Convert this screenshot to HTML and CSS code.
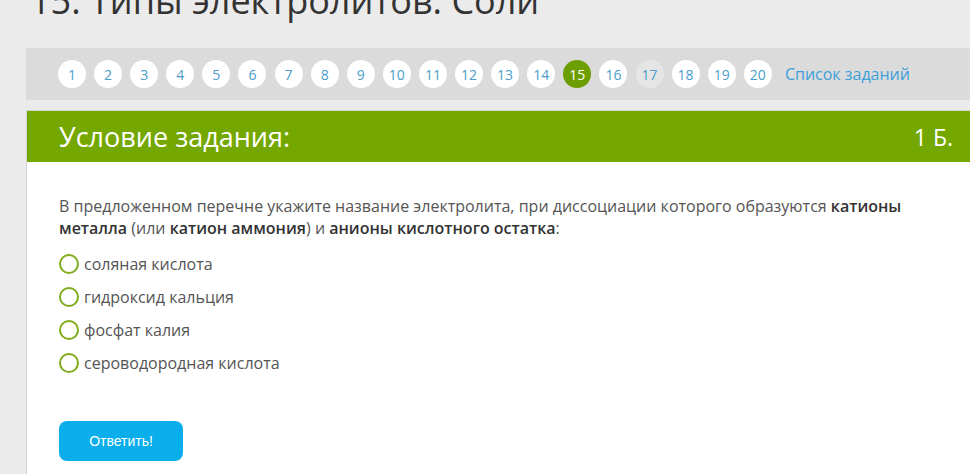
FILE: index.html
```html
<!DOCTYPE html>
<html lang="ru">
<head>
  <meta charset="UTF-8" />
  <meta name="viewport" content="width=device-width, initial-scale=1.0">
  <title>15. Типы электролитов. Соли</title>
  <link rel="stylesheet" href="styles.css">
</head>
<body>
  <div class="page">

    <!-- Title -->
    <h1 class="page-title">15. Типы электролитов. Соли</h1>

    <!-- Task navigation -->
    <div class="task-nav">
      <a class="task-num">1</a>
      <a class="task-num">2</a>
      <a class="task-num">3</a>
      <a class="task-num">4</a>
      <a class="task-num">5</a>
      <a class="task-num">6</a>
      <a class="task-num">7</a>
      <a class="task-num">8</a>
      <a class="task-num">9</a>
      <a class="task-num">10</a>
      <a class="task-num">11</a>
      <a class="task-num">12</a>
      <a class="task-num">13</a>
      <a class="task-num">14</a>
      <a class="task-num current">15</a>
      <a class="task-num">16</a>
      <a class="task-num visited">17</a>
      <a class="task-num">18</a>
      <a class="task-num">19</a>
      <a class="task-num">20</a>
      <a class="task-list">Список заданий</a>
    </div>

    <!-- Task card -->
    <div class="task-card">
      <div class="task-head">
        <span class="task-head-title">Условие задания:</span>
        <span class="task-points">1 Б.</span>
      </div>
      <div class="task-body">
        <p class="question">В предложенном перечне укажите название электролита, при диссоциации которого образуются <b>катионы металла</b> (или <b>катион аммония</b>) и <b>анионы кислотного остатка</b>:</p>

        <div class="answers">
          <label class="answer"><span class="radio"></span>соляная кислота</label>
          <label class="answer"><span class="radio"></span>гидроксид кальция</label>
          <label class="answer"><span class="radio"></span>фосфат калия</label>
          <label class="answer"><span class="radio"></span>сероводородная кислота</label>
        </div>

        <button class="submit-btn">Ответить!</button>
      </div>
    </div>

  </div>
</body>
</html>
```

FILE: styles.css
```css
html, body {
  margin: 0;
  height: 100%;
  overflow: hidden;
  background: #ebebeb;
  font-family: 'Open Sans', 'Liberation Sans', sans-serif;
  color: #555;
}

.page {
  width: 962px;
  margin-left: 26px;
}

.page-title {
  margin: -19px 0 0 4px;
  font-size: 36px;
  line-height: 40px;
  font-weight: 400;
  color: #333;
  white-space: nowrap;
}

/* TASK NAV */
.task-nav {
  margin-top: 27px;
  height: 52px;
  background: #dbdbdb;
  display: flex;
  align-items: center;
  gap: 8.1px;
  padding-left: 32px;
}

.task-num {
  width: 28px;
  height: 28px;
  border-radius: 50%;
  background: #fff;
  color: #4a9dca;
  font-size: 14px;
  display: flex;
  align-items: center;
  justify-content: center;
  flex-shrink: 0;
}

.task-num.current {
  background: #6c9e00;
  color: #fff;
}

.task-num.visited {
  background: #e5e5e5;
}

.task-list {
  margin-left: 5px;
  font-size: 16px;
  color: #3d9fd9;
  white-space: nowrap;
}

/* TASK CARD */
.task-card {
  margin-top: 10px;
  border: 1px solid #d3d3d3;
  border-bottom: none;
  background: #fff;
  height: 363px;
}

.task-head {
  height: 51px;
  background: #74a800;
  color: #fff;
  display: flex;
  align-items: center;
  justify-content: space-between;
  padding: 0 34px 0 32px;
}

.task-head-title {
  font-size: 27px;
}

.task-points {
  font-size: 23px;
}

.task-body {
  padding: 33px 34px 0 32px;
}

.question {
  margin: 0;
  font-size: 16px;
  line-height: 22px;
}

.question b {
  font-weight: 600;
  color: #333;
}

.answers {
  margin-top: 14px;
  display: flex;
  flex-direction: column;
  gap: 11px;
}

.answer {
  display: flex;
  align-items: center;
  gap: 5px;
  font-size: 16px;
  line-height: 22px;
}

.radio {
  width: 16px;
  height: 16px;
  border: 2px solid #7fac1c;
  border-radius: 50%;
  flex-shrink: 0;
}

.submit-btn {
  margin-top: 47px;
  width: 124px;
  height: 40px;
  border: none;
  border-radius: 8px;
  background: #09aeea;
  color: #fff;
  font-family: 'Liberation Sans', Arial, sans-serif;
  font-size: 14px;
  cursor: pointer;
}
```
